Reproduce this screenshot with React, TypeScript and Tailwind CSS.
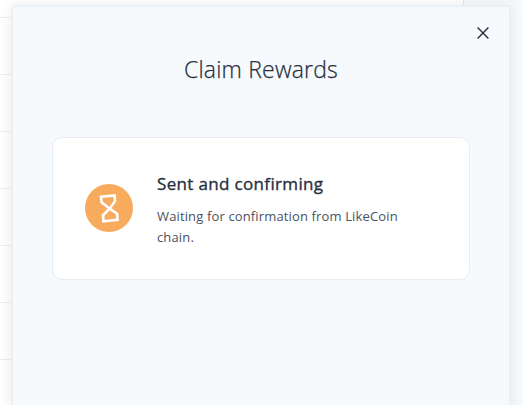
const rows = [0, 1, 2, 3, 4, 5, 6];

function BackgroundTable() {
  return (
    <div className="h-full w-[464px] border-r border-[#e6e5ef] bg-white">
      <div className="h-[18px] border-b border-[#ebeef1]" />
      {rows.map((row) => (
        <div key={row} className="h-[57px] border-b border-[#ebeef1]" />
      ))}
    </div>
  );
}

function CloseIcon() {
  return (
    <svg width="12" height="12" viewBox="0 0 12 12" fill="none" stroke="#28303f" strokeWidth="1.4">
      <path d="M0.6 0.6 11.4 11.4M11.4 0.6 0.6 11.4" />
    </svg>
  );
}

function HourglassIcon() {
  return (
    <svg width="48" height="48" viewBox="0 0 48 48" className="mb-0.5 shrink-0">
      <circle cx="24" cy="24" r="24" fill="#f9ab5d" />
      <path
        d="M16 12.7 29.6 11.4 30 17.2 24.6 24.6 32.1 29.8 32.5 35.9 18.4 37.4 18 31.3 24.6 24.6 16.6 18.2Z"
        fill="none"
        stroke="#fff"
        strokeWidth="2.6"
        strokeLinejoin="miter"
      />
    </svg>
  );
}

export default function App() {
  return (
    <div className="relative h-[405px] w-[523px] overflow-hidden bg-[#f7fafd] font-['Open_Sans','Noto_Sans',sans-serif] text-[#28303f]">
      <BackgroundTable />
      <section className="absolute top-[5px] left-[11px] h-[420px] w-[500px] rounded-[4px] border-2 border-[#ebf0f4] bg-[#f6fafd] shadow-[0_0_14px_rgba(0,0,0,0.08)]">
        <div className="flex justify-end pt-5 pr-5">
          <button aria-label="Close">
            <CloseIcon />
          </button>
        </div>
        <h1 className="mt-[14px] text-center text-[23px] leading-8 font-light">
          <span className="tracking-[0.18px] [-webkit-text-stroke:0.25px_#28303f]">Claim Rewards</span>
        </h1>
        <div className="mx-[39px] mt-[52px] flex h-[143px] items-center rounded-[10px] border border-[#e7ecf2] bg-white pl-8">
          <HourglassIcon />
          <div className="mt-[3px] ml-6 w-[270px]">
            <h2 className="text-[17px] leading-6 font-normal tracking-[0.34px] [-webkit-text-stroke:0.35px_#28303f]">
              Sent and confirming
            </h2>
            <p className="mt-[10px] w-[256px] text-[13px] leading-[21px] tracking-[0.14px] text-[#4a5161]">
              Waiting for confirmation from LikeCoin chain.
            </p>
          </div>
        </div>
      </section>
    </div>
  );
}
